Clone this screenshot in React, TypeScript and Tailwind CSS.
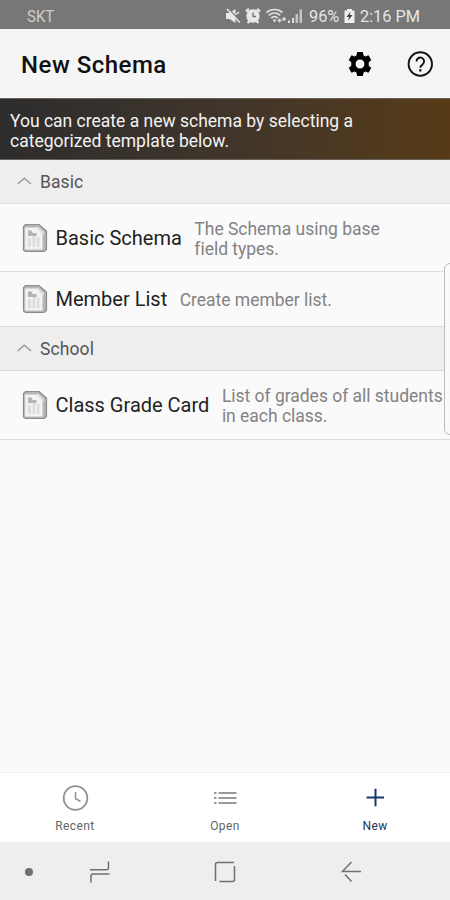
import type { ReactNode } from "react";

function StatusBar() {
  return (
    <div className="flex h-[29px] shrink-0 items-center bg-[#777777] pl-[27px] pt-[3px] text-[17px] leading-none text-[#e6e6e6]">
      <span className="w-[198px]">
        <span className="inline-block origin-left scale-x-[0.88] text-[#cfcfcf]">SKT</span>
      </span>
      <svg width="16" height="16" viewBox="0 0 16 16" className="shrink-0" fill="#e8e8e8">
        <path d="M1 5h3.500L10.500 1v14L4.500 11H1z" />
        <path d="M3.500 1L15.500 13" stroke="#777777" strokeWidth="1.200" />
        <path d="M2 1L14.800 14.500" stroke="#e8e8e8" strokeWidth="1.700" />
        <path d="M11 6.500l3-2.500" stroke="#e8e8e8" strokeWidth="1.500" />
      </svg>
      <svg width="16" height="16" viewBox="0 0 16 16" className="ml-[4px] shrink-0">
        <path d="M1 3.500L4 1M15 3.500L12 1" stroke="#e8e8e8" strokeWidth="2.400" />
        <path d="M2.500 15l2.500-2.500M13.500 15l-2.500-2.500" stroke="#e8e8e8" strokeWidth="2.400" />
        <circle cx="8" cy="8" r="6.700" fill="#e8e8e8" />
        <path d="M8 4.500V8.500h3" fill="none" stroke="#777777" strokeWidth="1.400" />
      </svg>
      <svg width="21" height="16" viewBox="0 0 21 16" className="ml-[5px] shrink-0" fill="none" stroke="#e0e0e0">
        <path d="M.5 4.500C5 .5 12 .5 16.500 4.500" strokeWidth="1.700" />
        <path d="M2.800 7.300C6.200 4.300 10.800 4.300 14.200 7.300" strokeWidth="1.700" />
        <path d="M5.200 10C7.200 8.300 9.800 8.300 11.800 10" strokeWidth="1.700" />
        <path d="M6.500 11.500h4L8.500 14.500z" fill="#e0e0e0" stroke="none" />
        <path d="M11.500 12.500h4M13.500 10.500v4M16 11h4M18 9v4" strokeWidth="1.300" />
      </svg>
      <svg width="17" height="16" viewBox="0 0 17 16" className="shrink-0" fill="#dedede">
        <path d="M1 12.500h2V15H1zM5 10h2v5H5z" />
        <path d="M8.500 6H11v9H8.500zM12.500 1.500H15V15h-2.500z" opacity=".75" />
      </svg>
      <span className="ml-[5px] w-[35px] whitespace-nowrap">
        <span className="inline-block origin-left scale-x-[0.96]">96%</span>
      </span>
      <svg width="11" height="16" viewBox="0 0 11 16" className="shrink-0">
        <path d="M3 1h5v1.500h2.500V15h-10V2.500H3z" fill="#f0f0f0" />
        <path d="M6.500 3.500L2.500 9h2.600L4 13l4.500-6H5.800z" fill="#444444" />
      </svg>
      <span className="ml-[5px] whitespace-nowrap">
        <span className="inline-block origin-left scale-x-[0.96]">2:16 PM</span>
      </span>
    </div>
  );
}

function AppBar() {
  return (
    <header className="flex h-[69px] shrink-0 items-center bg-[#f5f5f5] pl-[21px] pt-[1px]">
      <h1 className="w-[326px] whitespace-nowrap pt-[1px] text-[24px] font-medium leading-none tracking-[0.5px] text-[#111111]">New Schema</h1>
      <svg width="26" height="26" viewBox="0 0 24 24" className="shrink-0" fill="#000">
        <path
          fillRule="evenodd"
          d="M9.400 1h5.200l.6 3 1.700 1 2.900-1 2.600 4.300-2.300 2.100v3.200l2.300 2.100-2.600 4.300-2.900-1-1.700 1-.6 3H9.400l-.6-3-1.700-1-2.900 1-2.600-4.300 2.300-2.100v-3.200L1.600 8.300 4.200 4l2.900 1 1.700-1zM12 7.900a4.100 4.100 0 1 0 0 8.200 4.100 4.100 0 0 0 0-8.200z"
        />
      </svg>
      <svg width="26" height="26" viewBox="0 0 26 26" className="ml-[34px] shrink-0" fill="none" stroke="#111" strokeWidth="1.900">
        <circle cx="13.300" cy="13" r="11.700" />
        <path d="M9.500 10.400a3.800 3.800 0 1 1 6 3.100c-1.300 1-2.200 1.600-2.200 3.200" />
        <path d="M13.300 18.200v2.300" strokeWidth="2.200" />
      </svg>
    </header>
  );
}

function SectionHeader({ title }: { title: string }) {
  return (
    <div className="flex h-[44px] shrink-0 items-center border-b border-[#dddddd] bg-[#eeeeee] pl-[17px] pt-[2px]">
      <svg width="15" height="8" viewBox="0 0 15 8" className="-mt-[3px]" fill="none" stroke="#9a9a9a" strokeWidth="1.400">
        <path d="M.7 7L7.300 1.200 14 7" />
      </svg>
      <span className="ml-[8px] text-[17.500px] leading-none tracking-[0.100px] text-[#555555]">{title}</span>
    </div>
  );
}

function DocumentIcon() {
  return (
    <svg width="26" height="30" viewBox="0 0 26 30" className="shrink-0">
      <path d="M3.500 1.500H17L24.500 8v18.500L22 28.500H3.500L1.500 27V3.500z" fill="#b4b4b4" stroke="#8c8c8c" strokeWidth="1.200" />
      <path d="M3 4.500h12L20.500 10v16.500H3z" fill="#f2f2f2" stroke="#d5d5d5" strokeWidth=".8" />
      <path d="M15.500 3l6.500 6v3L15 5z" fill="#dedede" />
      <path d="M6 7.500h3.500l1 2.500h4v3H6z" fill="#b4b4b4" />
      <path d="M6 15h3v9H6zM10.500 13h3v11h-3zM15 14h2.500v10H15z" fill="#dddddd" />
    </svg>
  );
}

function TemplateRow({ name, height, children }: { name: string; height: string; children: ReactNode }) {
  return (
    <div className={`flex shrink-0 items-center border-b border-[#dcdcdc] pl-[22px] ${height}`}>
      <DocumentIcon />
      <span className="ml-[7.500px] whitespace-nowrap text-[20px] leading-none text-[#222222]">{name}</span>
      <span className="ml-[12.500px] whitespace-nowrap pt-[2px] text-[17.500px] leading-[20px] tracking-[-0.020px] text-[#838383]">{children}</span>
    </div>
  );
}

function Tab({ label, active, children }: { label: string; active?: boolean; children: ReactNode }) {
  return (
    <div className={`flex flex-1 flex-col items-center pt-[11px] ${active ? "text-[#183566]" : "text-[#666666]"}`}>
      <svg width="28" height="28" viewBox="0 0 28 28" fill="none">
        {children}
      </svg>
      <span className="mt-[7px] text-[12px] leading-[14px] tracking-[0.4px]">{label}</span>
    </div>
  );
}

export default function App() {
  return (
    <div className="relative flex h-[900px] w-[450px] flex-col overflow-hidden bg-[#fafafa] font-['Roboto',sans-serif]">
      <StatusBar />
      <AppBar />
      <div className="h-[62px] shrink-0 whitespace-nowrap border-y border-[#6a6259] bg-linear-to-r from-[#2d2d2d] via-[#40352a] to-[#573b16] pl-[10px] pt-[12px] text-[17.500px] leading-[20px] text-[#f3f3f3]">
        You can create a new schema by selecting a<br />categorized template below.
      </div>
      <SectionHeader title="Basic" />
      <TemplateRow name="Basic Schema" height="h-[68px]">The Schema using base<br />field types.</TemplateRow>
      <TemplateRow name="Member List" height="h-[55px]">Create member list.</TemplateRow>
      <SectionHeader title="School" />
      <TemplateRow name="Class Grade Card" height="h-[69px]">List of grades of all students<br />in each class.</TemplateRow>
      <div className="flex-1" />
      <nav className="flex h-[70px] shrink-0 border-t border-[#eeeeee] bg-white">
        <Tab label="Recent">
          <circle cx="14.500" cy="14" r="11.800" stroke="#929292" strokeWidth="1.800" />
          <path d="M14.500 8v6.500l5 3" stroke="#929292" strokeWidth="1.500" />
        </Tab>
        <Tab label="Open">
          <path d="M3 9h2.500M3 14h2.500M3 19h2.500M7.500 9h18M7.500 14h18M7.500 19h18" stroke="#999999" strokeWidth="1.800" />
        </Tab>
        <Tab label="New" active>
          <path d="M5.500 13.500h17.500M14.500 4.800v17.500" stroke="#183566" strokeWidth="2" />
        </Tab>
      </nav>
      <div className="flex h-[58px] shrink-0 items-center bg-[#eeeeee] pl-[25px] pt-[1px]">
        <span className="size-[8px] rounded-full bg-[#707070]" />
        <svg width="22" height="24" viewBox="0 0 22 24" className="ml-[56px]" fill="none" stroke="#707070" strokeWidth="1.500">
          <path d="M1 9.700h16.500q2 0 2-2V1.500M20.500 14H4q-2 0-2 2v6.500" />
        </svg>
        <svg width="22" height="22" viewBox="0 0 22 22" className="ml-[103px]" fill="none" stroke="#707070" strokeWidth="1.500">
          <path d="M1.500 20V3.500q0-2 2-2H20M20.500 5v13.500q0 2-2 2H5.500" />
        </svg>
        <svg width="22" height="22" viewBox="0 0 22 22" className="ml-[105px]" fill="none" stroke="#707070" strokeWidth="1.500">
          <path d="M10.500 1L1.500 10.500h18.500M4 13.500l6.500 7" />
        </svg>
      </div>
      <div className="absolute left-[444px] top-[263px] h-[172px] w-[12px] rounded-[7px] border border-[#bbbbbb] bg-[#fafafa]" />
    </div>
  );
}
